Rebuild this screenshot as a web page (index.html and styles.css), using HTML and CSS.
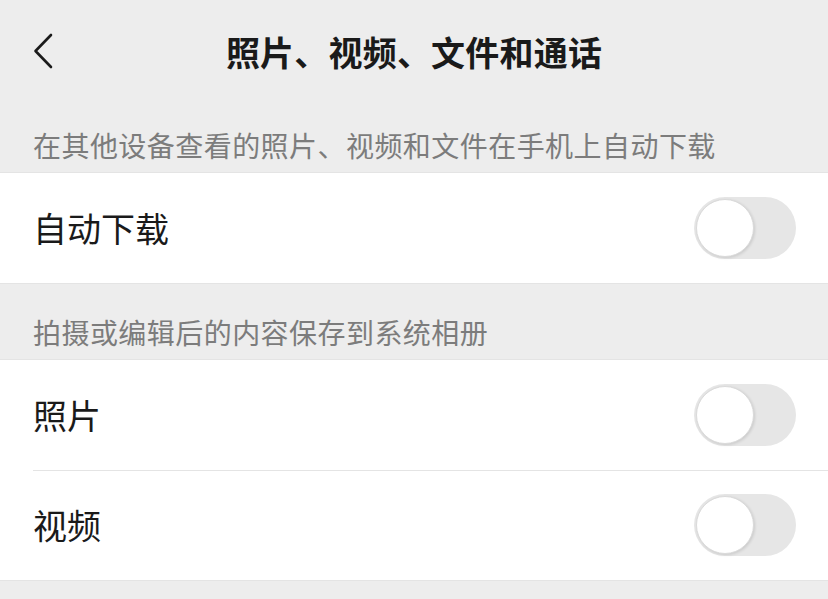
FILE: index.html
```html
<!DOCTYPE html>
<html lang="zh-CN">
<head>
<meta charset="utf-8">
<title>照片、视频、文件和通话</title>
<link rel="stylesheet" href="styles.css">
</head>
<body>
<div class="page">
  <header class="navbar">
    <span class="back">
      <svg width="22" height="36" viewBox="0 0 22 36"><path d="M19 2 L3.5 18 L19 34" fill="none" stroke="#1a1a1a" stroke-width="2.6" stroke-linecap="round" stroke-linejoin="round"/></svg>
    </span>
    <h1 class="title">照片、视频、文件和通话</h1>
  </header>

  <div class="section-title">在其他设备查看的照片、视频和文件在手机上自动下载</div>
  <div class="card">
    <div class="row">
      <span class="label">自动下载</span>
      <span class="switch"><span class="knob"></span></span>
    </div>
  </div>

  <div class="section-title">拍摄或编辑后的内容保存到系统相册</div>
  <div class="card">
    <div class="row">
      <span class="label">照片</span>
      <span class="switch"><span class="knob"></span></span>
    </div>
    <div class="row sep">
      <span class="label">视频</span>
      <span class="switch"><span class="knob"></span></span>
    </div>
  </div>
</div>
</body>
</html>
```

FILE: styles.css
```css
html, body {
  margin: 0;
  padding: 0;
  background: #ededed;
}
body {
  font-family: "Noto Sans CJK SC", "Noto Sans", sans-serif;
  color: #1a1a1a;
}
.page {
  width: 828px;
  height: 599px;
  overflow: hidden;
}
.navbar {
  position: relative;
  height: 97px;
  display: flex;
  align-items: center;
  justify-content: center;
}
.back {
  position: absolute;
  left: 32px;
  top: 33px;
  width: 22px;
  height: 36px;
}
.back svg { display: block; }
.title {
  margin: 0;
  font-size: 34px;
  font-weight: 700;
  line-height: 40px;
  margin-top: 6px;
  color: #1a1a1a;
  letter-spacing: 0.2px;
}
.section-title {
  padding: 32px 33px 11px;
  height: 32px;
  font-size: 28px;
  line-height: 32px;
  color: #7c7c7c;
  letter-spacing: 0.45px;
}
.card {
  background: #fff;
  border-top: 1px solid #e4e4e4;
  border-bottom: 1px solid #e4e4e4;
}
.row {
  height: 110px;
  display: flex;
  align-items: center;
  justify-content: space-between;
  padding: 0 32px 0 33px;
  position: relative;
}
.row.sep::before {
  content: "";
  position: absolute;
  left: 33px;
  right: 0;
  top: 0;
  height: 1px;
  background: #e4e4e4;
}
.label {
  font-size: 34px;
  line-height: 40px;
  color: #1a1a1a;
}
.switch {
  position: relative;
  width: 102px;
  height: 62px;
  border-radius: 31px;
  background: #e6e6e6;
  box-sizing: border-box;
}
.knob {
  position: absolute;
  left: 2px;
  top: 2px;
  width: 58px;
  height: 58px;
  border-radius: 50%;
  background: #fff;
  box-sizing: border-box;
  border: 1px solid #dadada;
  box-shadow: 1px 1px 3px rgba(0,0,0,0.12);
}
```
